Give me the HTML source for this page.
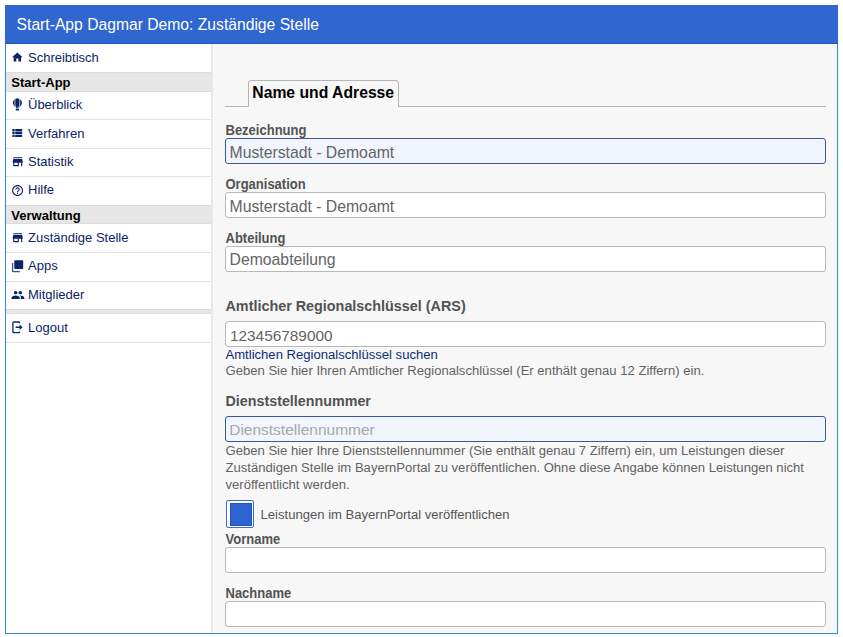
<!DOCTYPE html>
<html><head><meta charset="utf-8"><style>
*{margin:0;padding:0;box-sizing:border-box}
html,body{width:843px;height:637px;overflow:hidden;background:#fff;font-family:"Liberation Sans",sans-serif}
.t{position:absolute;white-space:pre}
#frame{position:absolute;left:5px;top:5px;width:833px;height:629px;border:1px solid #328bd2;background:#f7f7f7;box-shadow:0 0 1px #cfe2f5}
#hdr{position:absolute;left:5px;top:5px;width:833px;height:39px;background:#2f66d0;border-bottom:1px solid #2257c8}
#side{position:absolute;left:6px;top:44px;width:205px;height:589px;background:#fff}
#sideedge{position:absolute;left:211px;top:44px;width:2px;height:589px;background:#e8e8e8}
#main{position:absolute;left:213px;top:44px;width:624px;height:589px;background:#f7f7f7}
.band{position:absolute;left:6px;width:205px;background:#e6e6e6;border-top:1px solid #dcdcdc;border-bottom:1px solid #dcdcdc}
.hl{position:absolute;left:6px;width:205px;height:1px;background:#e2e2e2}
.ic{position:absolute;overflow:visible}
#tabline{position:absolute;left:225px;top:106px;width:601px;height:1px;background:#b4b4b4}
#tab{position:absolute;left:248px;top:80px;width:151px;height:27px;border:1px solid #b4b4b4;border-bottom:none;border-radius:4px 4px 0 0;background:#f7f7f7}
.inp{position:absolute;left:225px;width:601px;background:#fff;border:1px solid #b8b8b8;border-radius:3px}
.inp.f{background:#f0f5fe;border-color:#3b5796}
#cb{position:absolute;left:226px;top:500px;width:28px;height:28px;border:1px solid #3d6ad6;border-radius:2px;background:#fff}
#cb div{position:absolute;left:2.5px;top:2.3px;width:22.5px;height:22.6px;background:#2f63cf;border:0.5px solid #1d52c6}
</style></head>
<body>
<div id="frame"></div>
<div id="hdr"></div>
<div class="t" style="left:16.6px;top:15.76px;font-size:15.68px;line-height:18.816px;color:#ffffff;font-weight:normal;letter-spacing:0px;">Start-App Dagmar Demo: Zuständige Stelle</div>
<div id="side"></div>
<div id="sideedge"></div>
<div id="main"></div>
<div class="band" style="top:72px;height:20px"></div>
<div class="band" style="top:205px;height:19px"></div>
<div class="band" style="top:309px;height:5px"></div>
<div class="hl" style="top:119px"></div>
<div class="hl" style="top:148px"></div>
<div class="hl" style="top:176px"></div>
<div class="hl" style="top:252px"></div>
<div class="hl" style="top:281px"></div>
<div class="hl" style="top:342px"></div>
<svg class="ic" style="left:11.14px;top:51.01px" width="12.72" height="12.72" viewBox="0 0 24 24"><path fill="#0b2468" d="M10 20v-6h4v6h5v-8h3L12 3 2 12h3v8z"/></svg>
<div class="t" style="left:28px;top:49.70px;font-size:13px;line-height:15.6px;color:#0b2468;font-weight:normal;letter-spacing:0px;">Schreibtisch</div>
<svg class="ic" style="left:12px;top:98.4px" width="12" height="14" viewBox="0 0 12 14"><path d="M5.2 0.2 C2.8 0.4 0.9 2.4 0.9 4.6 C0.9 7 2.4 8.6 4.3 9.8 H6.5 C8.4 8.6 9.9 7 9.9 4.6 C9.9 2.4 8 0.4 5.2 0.2 Z" fill="#0b2468"/><path d="M3.3 0.9 C2.6 2.5 2.6 6.5 3.6 9.6 M7.3 0.9 C8 2.5 8 6.5 7.1 9.6" stroke="#fff" stroke-width="0.7" fill="none"/><rect x="3.7" y="10.6" width="3.3" height="1.9" rx="0.6" fill="#0b2468"/></svg>
<div class="t" style="left:28px;top:96.70px;font-size:13px;line-height:15.6px;color:#0b2468;font-weight:normal;letter-spacing:0px;">Überblick</div>
<svg class="ic" style="left:10.40px;top:126.09px" width="13.92" height="13.92" viewBox="0 0 24 24"><path fill="#0b2468" d="M4 14h4v-4H4v4zm0 5h4v-4H4v4zM4 9h4V5H4v4zm5 5h12v-4H9v4zm0 5h12v-4H9v4zM9 5v4h12V5H9z"/></svg>
<div class="t" style="left:28px;top:125.50px;font-size:13px;line-height:15.6px;color:#0b2468;font-weight:normal;letter-spacing:0px;">Verfahren</div>
<svg class="ic" style="left:10.78px;top:154.61px" width="13.44" height="13.44" viewBox="0 0 24 24"><path fill="#0b2468" d="M20 4H4v2h16V4zm1 10v-2l-1-5H4l-1 5v2h1v6h10v-6h4v6h2v-6h1zm-9 4H6v-4h6v4z"/></svg>
<div class="t" style="left:28px;top:154.00px;font-size:13px;line-height:15.6px;color:#0b2468;font-weight:normal;letter-spacing:0px;">Statistik</div>
<svg class="ic" style="left:10.80px;top:183.50px" width="13.20" height="13.20" viewBox="0 0 24 24"><path fill="#0b2468" d="M11 18h2v-2h-2v2zm1-16C6.48 2 2 6.48 2 12s4.48 10 10 10 10-4.48 10-10S17.52 2 12 2zm0 18c-4.41 0-8-3.59-8-8s3.59-8 8-8 8 3.59 8 8-3.59 8-8 8zm0-14c-2.21 0-4 1.79-4 4h2c0-1.1.9-2 2-2s2 .9 2 2c0 2-3 1.75-3 5h2c0-2.25 3-2.5 3-5 0-2.21-1.79-4-4-4z"/></svg>
<div class="t" style="left:28px;top:182.40px;font-size:13px;line-height:15.6px;color:#0b2468;font-weight:normal;letter-spacing:0px;">Hilfe</div>
<svg class="ic" style="left:10.78px;top:230.51px" width="13.44" height="13.44" viewBox="0 0 24 24"><path fill="#0b2468" d="M20 4H4v2h16V4zm1 10v-2l-1-5H4l-1 5v2h1v6h10v-6h4v6h2v-6h1zm-9 4H6v-4h6v4z"/></svg>
<div class="t" style="left:28px;top:230.10px;font-size:13px;line-height:15.6px;color:#0b2468;font-weight:normal;letter-spacing:0px;">Zuständige Stelle</div>
<svg class="ic" style="left:11.4px;top:259px" width="14" height="14" viewBox="0 0 14 14"><rect x="3.3" y="1.2" width="8.9" height="8.8" rx="0.8" fill="#0b2468"/><path d="M1.6 4 V11.9 C1.6 12.3 1.9 12.6 2.3 12.6 H8.9" stroke="#0b2468" stroke-width="1.3" fill="none" opacity="0.8"/></svg>
<div class="t" style="left:28px;top:258.30px;font-size:13px;line-height:15.6px;color:#0b2468;font-weight:normal;letter-spacing:0px;">Apps</div>
<svg class="ic" style="left:10.64px;top:288.05px" width="13.92" height="13.92" viewBox="0 0 24 24"><path fill="#0b2468" d="M16 11c1.66 0 2.99-1.34 2.99-3S17.66 5 16 5c-1.66 0-3 1.34-3 3s1.34 3 3 3zm-8 0c1.66 0 2.99-1.34 2.99-3S9.66 5 8 5C6.34 5 5 6.34 5 8s1.34 3 3 3zm0 2c-2.33 0-7 1.17-7 3.5V19h14v-2.5c0-2.33-4.67-3.5-7-3.5zm8 0c-.29 0-.62.02-.97.05 1.16.84 1.97 1.97 1.97 3.45V19h6v-2.5c0-2.33-4.67-3.5-7-3.5z"/></svg>
<div class="t" style="left:28px;top:286.80px;font-size:13px;line-height:15.6px;color:#0b2468;font-weight:normal;letter-spacing:0px;">Mitglieder</div>
<svg class="ic" style="left:12px;top:320.9px" width="12" height="13" viewBox="0 0 12 13"><path d="M7.6 2.2 V1.9 C7.6 1.4 7.2 1 6.7 1 H1.8 C1.3 1 0.9 1.4 0.9 1.9 V10.8 C0.9 11.3 1.3 11.7 1.8 11.7 H6.7 C7.2 11.7 7.6 11.3 7.6 10.8 V10.5" stroke="#0b2468" stroke-width="1.3" fill="none"/><path d="M3.6 5.5 H7.6 V3.6 L10.6 6.3 L7.6 9 V7.1 H3.6 Z" fill="#0b2468"/></svg>
<div class="t" style="left:28px;top:319.50px;font-size:13px;line-height:15.6px;color:#0b2468;font-weight:normal;letter-spacing:0px;">Logout</div>
<div class="t" style="left:11.3px;top:74.70px;font-size:13px;line-height:15.6px;color:#000;font-weight:bold;letter-spacing:0px;">Start-App</div>
<div class="t" style="left:11.3px;top:208.10px;font-size:13px;line-height:15.6px;color:#000;font-weight:bold;letter-spacing:0px;">Verwaltung</div>
<div id="tabline"></div>
<div id="tab"></div>
<div class="t" style="left:252.3px;top:83.92px;font-size:15.72px;line-height:18.864px;color:#000;font-weight:bold;letter-spacing:0px;">Name und Adresse</div>
<div class="t" style="left:225.5px;top:123.00px;font-size:13px;line-height:15.6px;color:#525252;font-weight:bold;letter-spacing:0px;transform:scaleY(1.08);transform-origin:0 80%;">Bezeichnung</div>
<div class="inp f" style="top:138px;height:26px"></div>
<div class="t" style="left:229.6px;top:143.79px;font-size:15.75px;line-height:18.9px;color:#646464;font-weight:normal;letter-spacing:0px;">Musterstadt - Demoamt</div>
<div class="t" style="left:225.5px;top:177.00px;font-size:13px;line-height:15.6px;color:#525252;font-weight:bold;letter-spacing:0px;transform:scaleY(1.08);transform-origin:0 80%;">Organisation</div>
<div class="inp" style="top:192px;height:26px"></div>
<div class="t" style="left:229.6px;top:197.89px;font-size:15.75px;line-height:18.9px;color:#646464;font-weight:normal;letter-spacing:0px;">Musterstadt - Demoamt</div>
<div class="t" style="left:225.5px;top:231.00px;font-size:13px;line-height:15.6px;color:#525252;font-weight:bold;letter-spacing:0px;transform:scaleY(1.1);transform-origin:0 80%;">Abteilung</div>
<div class="inp" style="top:246px;height:26px"></div>
<div class="t" style="left:229.6px;top:250.69px;font-size:15.75px;line-height:18.9px;color:#646464;font-weight:normal;letter-spacing:0px;">Demoabteilung</div>
<div class="t" style="left:225.5px;top:297.91px;font-size:14.36px;line-height:17.232px;color:#525252;font-weight:bold;letter-spacing:0px;">Amtlicher Regionalschlüssel (ARS)</div>
<div class="inp" style="top:321px;height:26px"></div>
<div class="t" style="left:229.9px;top:326.82px;font-size:15.4px;line-height:18.48px;color:#646464;font-weight:normal;letter-spacing:0px;">123456789000</div>
<div class="t" style="left:225.5px;top:346.92px;font-size:13.08px;line-height:15.696px;color:#0b2c78;font-weight:normal;letter-spacing:0px;">Amtlichen Regionalschlüssel suchen</div>
<div class="t" style="left:225.5px;top:362.62px;font-size:13.08px;line-height:15.696px;color:#626262;font-weight:normal;letter-spacing:0px;">Geben Sie hier Ihren Amtlicher Regionalschlüssel (Er enthält genau 12 Ziffern) ein.</div>
<div class="t" style="left:225.5px;top:392.87px;font-size:14.3px;line-height:17.16px;color:#525252;font-weight:bold;letter-spacing:0px;">Dienststellennummer</div>
<div class="inp f" style="top:416px;height:26px"></div>
<div class="t" style="left:229.2px;top:421.13px;font-size:15.5px;line-height:18.6px;color:#a8a8a8;font-weight:normal;letter-spacing:0px;">Dienststellennummer</div>
<div class="t" style="left:225.5px;top:442.62px;font-size:13.08px;line-height:15.696px;color:#626262;font-weight:normal;letter-spacing:0px;">Geben Sie hier Ihre Dienststellennummer (Sie enthält genau 7 Ziffern) ein, um Leistungen dieser</div>
<div class="t" style="left:225.5px;top:460.02px;font-size:13.08px;line-height:15.696px;color:#626262;font-weight:normal;letter-spacing:0px;">Zuständigen Stelle im BayernPortal zu veröffentlichen. Ohne diese Angabe können Leistungen nicht</div>
<div class="t" style="left:225.5px;top:477.02px;font-size:13.08px;line-height:15.696px;color:#626262;font-weight:normal;letter-spacing:0px;">veröffentlicht werden.</div>
<div id="cb"><div></div></div>
<div class="t" style="left:260.5px;top:506.82px;font-size:13.08px;line-height:15.696px;color:#555;font-weight:normal;letter-spacing:0px;">Leistungen im BayernPortal veröffentlichen</div>
<div class="t" style="left:225.5px;top:531.90px;font-size:13px;line-height:15.6px;color:#525252;font-weight:bold;letter-spacing:0px;transform:scaleY(1.1);transform-origin:0 80%;">Vorname</div>
<div class="inp" style="top:547px;height:26px"></div>
<div class="t" style="left:225.5px;top:585.90px;font-size:13px;line-height:15.6px;color:#525252;font-weight:bold;letter-spacing:0px;transform:scaleY(1.1);transform-origin:0 80%;">Nachname</div>
<div class="inp" style="top:601px;height:26px"></div>
</body></html>
